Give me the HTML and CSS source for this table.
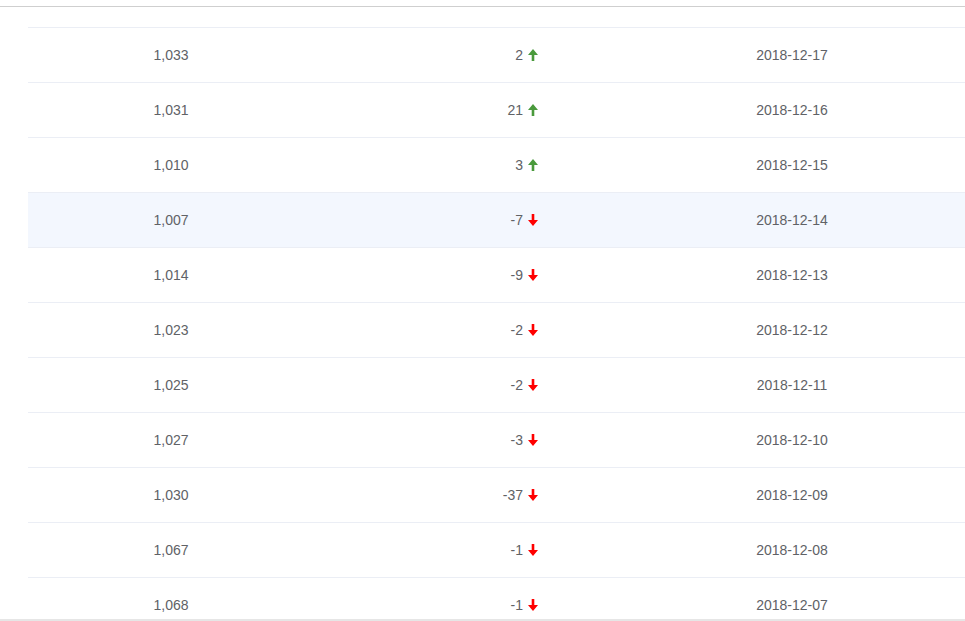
FILE: index.html
```html
<!DOCTYPE html>
<html>
<head>
<meta charset="utf-8">
<link rel="stylesheet" href="styles.css">
</head>
<body>
<div class="frame">
  <div class="scroller">
    <div class="table">
      <div class="row"><div class="c1">1,033</div><div class="c2">2<svg class="arr up" viewBox="0 0 10 12"><polygon points="5,0 10,6 6.3,6 6.3,12 3.7,12 3.7,6 0,6"/></svg></div><div class="c3">2018-12-17</div></div>
      <div class="row"><div class="c1">1,031</div><div class="c2">21<svg class="arr up" viewBox="0 0 10 12"><polygon points="5,0 10,6 6.3,6 6.3,12 3.7,12 3.7,6 0,6"/></svg></div><div class="c3">2018-12-16</div></div>
      <div class="row"><div class="c1">1,010</div><div class="c2">3<svg class="arr up" viewBox="0 0 10 12"><polygon points="5,0 10,6 6.3,6 6.3,12 3.7,12 3.7,6 0,6"/></svg></div><div class="c3">2018-12-15</div></div>
      <div class="row hover"><div class="c1">1,007</div><div class="c2">-7<svg class="arr down" viewBox="0 0 10 12"><polygon points="3.7,0 6.3,0 6.3,6 10,6 5,12 0,6 3.7,6"/></svg></div><div class="c3">2018-12-14</div></div>
      <div class="row"><div class="c1">1,014</div><div class="c2">-9<svg class="arr down" viewBox="0 0 10 12"><polygon points="3.7,0 6.3,0 6.3,6 10,6 5,12 0,6 3.7,6"/></svg></div><div class="c3">2018-12-13</div></div>
      <div class="row"><div class="c1">1,023</div><div class="c2">-2<svg class="arr down" viewBox="0 0 10 12"><polygon points="3.7,0 6.3,0 6.3,6 10,6 5,12 0,6 3.7,6"/></svg></div><div class="c3">2018-12-12</div></div>
      <div class="row"><div class="c1">1,025</div><div class="c2">-2<svg class="arr down" viewBox="0 0 10 12"><polygon points="3.7,0 6.3,0 6.3,6 10,6 5,12 0,6 3.7,6"/></svg></div><div class="c3">2018-12-11</div></div>
      <div class="row"><div class="c1">1,027</div><div class="c2">-3<svg class="arr down" viewBox="0 0 10 12"><polygon points="3.7,0 6.3,0 6.3,6 10,6 5,12 0,6 3.7,6"/></svg></div><div class="c3">2018-12-10</div></div>
      <div class="row"><div class="c1">1,030</div><div class="c2">-37<svg class="arr down" viewBox="0 0 10 12"><polygon points="3.7,0 6.3,0 6.3,6 10,6 5,12 0,6 3.7,6"/></svg></div><div class="c3">2018-12-09</div></div>
      <div class="row"><div class="c1">1,067</div><div class="c2">-1<svg class="arr down" viewBox="0 0 10 12"><polygon points="3.7,0 6.3,0 6.3,6 10,6 5,12 0,6 3.7,6"/></svg></div><div class="c3">2018-12-08</div></div>
      <div class="row"><div class="c1">1,068</div><div class="c2">-1<svg class="arr down" viewBox="0 0 10 12"><polygon points="3.7,0 6.3,0 6.3,6 10,6 5,12 0,6 3.7,6"/></svg></div><div class="c3">2018-12-07</div></div>
    </div>
  </div>
</div>
</body>
</html>
```

FILE: styles.css
```css
html, body {
  margin: 0;
  padding: 0;
  background: #ffffff;
}
body {
  font-family: "Liberation Sans", Arial, sans-serif;
  font-size: 14px;
  color: #606266;
  overflow: hidden;
}
.frame {
  margin-top: 6px;
  border-top: 1px solid #cfcfcf;
}
.scroller {
  height: 614px;
  overflow: hidden;
  border-bottom: 2px solid #e6e6e6;
  padding-top: 20px;
  box-sizing: border-box;
  padding-left: 28px;
}
.table {
  border-top: 1px solid #ebeef5;
}
.row {
  display: grid;
  grid-template-columns: 286px 307px 1fr;
  height: 54px;
  align-items: center;
  border-bottom: 1px solid #ebeef5;
}
.row.hover {
  background: #f3f7fe;
}
.c1, .c3 {
  text-align: center;
}
.c3 {
  padding-right: 2px;
}
.c2 {
  display: flex;
  justify-content: flex-end;
  align-items: center;
  padding-right: 83px;
}
.arr {
  width: 10px;
  height: 12px;
  margin-left: 5px;
  margin-top: -1px;
}
.arr.up { fill: #4a9a3c; }
.arr.down { fill: #ff0000; }
```
